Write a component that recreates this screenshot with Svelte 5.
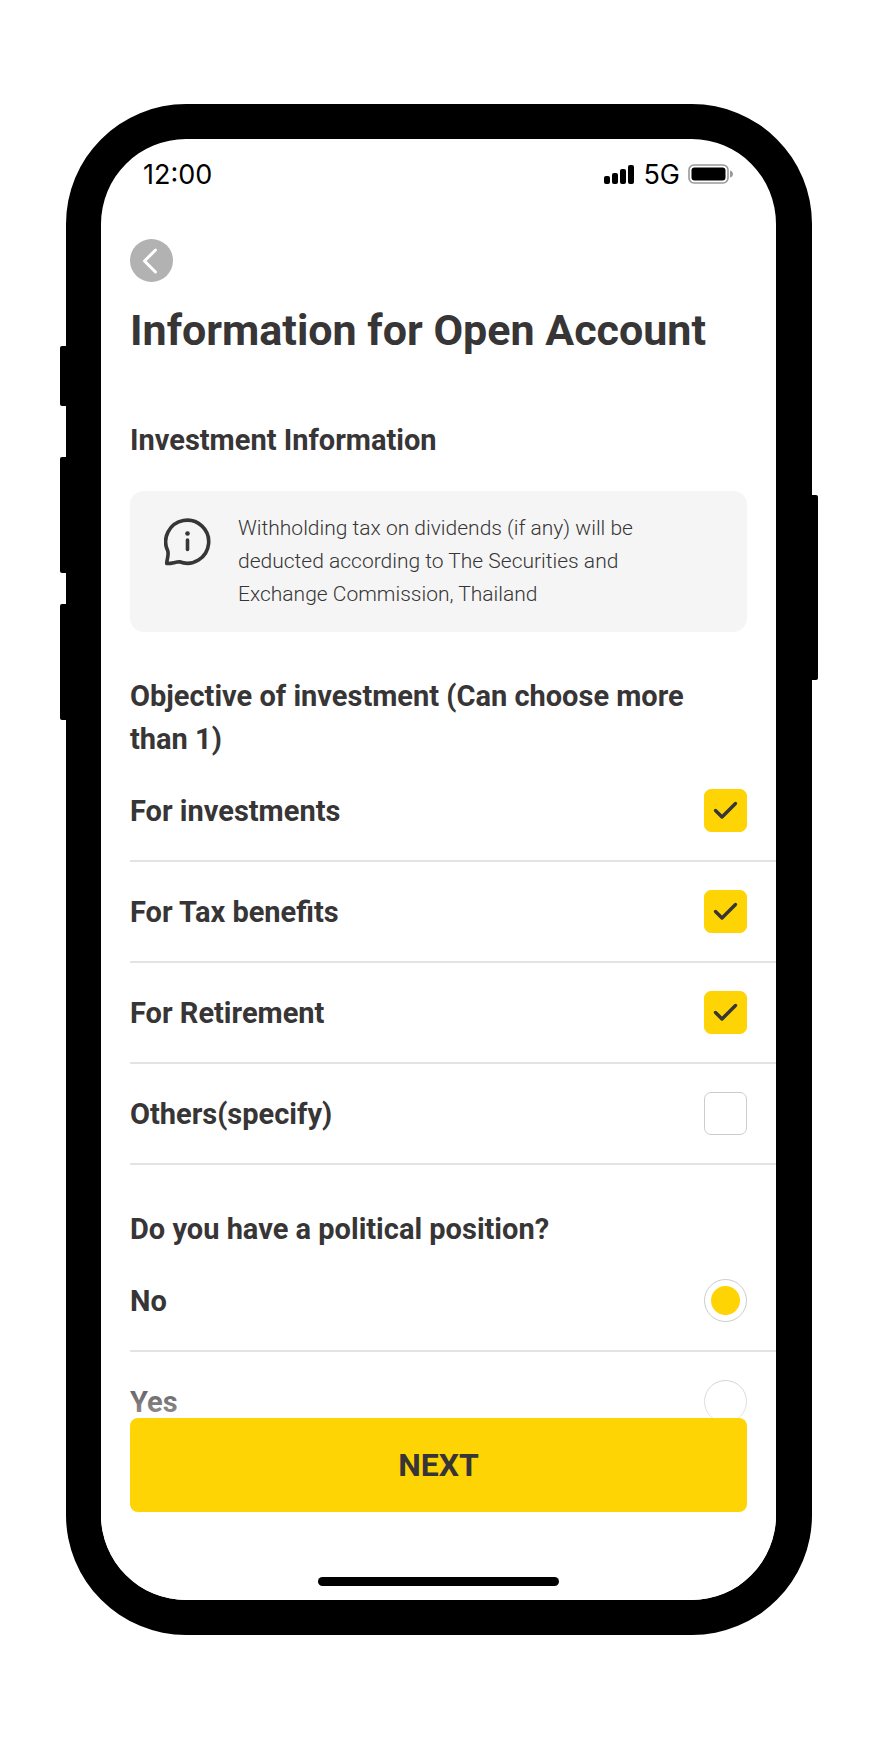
<div class="page">
	<div class="phone">
		<span class="key mute"></span>
		<span class="key up"></span>
		<span class="key down"></span>
		<span class="key power"></span>

		<div class="status">
			<span>12:00</span>
			<div class="signals">
				<svg width="31" height="19" viewBox="0 0 31 19">
					{#each bars as h, i}
						<rect x={i * 8} y={19 - h} width="6" height={h} rx="2" />
					{/each}
				</svg>
				<span>5G</span>
				<svg width="45" height="20" viewBox="0 0 45 20">
					<rect x="1" y="1" width="39" height="18" rx="5" fill="none" stroke="#999" stroke-width="1.6" />
					<rect x="3.500" y="3.500" width="34" height="13" rx="3" />
					<path d="M42 6.5c4 1 4 6 0 7z" fill="#999" />
				</svg>
			</div>
		</div>

		<main>
			<button class="back" aria-label="Back">
				<svg width="43" height="43" viewBox="0 0 43 43">
					<path d="M25.500 11L14.500 22l11 11" />
				</svg>
			</button>
			<h1>Information for Open Account</h1>
			<h2 class="section">Investment Information</h2>

			<div class="note">
				<svg width="48" height="48" viewBox="0 0 48 48">
					<path d="M2.800 45.500C2.500 42 5 38 3.800 33A21.500 21.500 0 1 1 15.500 43.800C11 44 7 46 2.800 45.500Z" />
					<path d="M23.500 22v9.500" />
					<circle cx="23.500" cy="15.500" r="2.300" />
				</svg>
				<p>Withholding tax on dividends (if any) will be deducted according to The Securities and Exchange Commission, Thailand</p>
			</div>

			<h2>Objective of investment (Can choose more than 1)</h2>
			{#each objectives as o}
				<label class="row">
					{o.label}
					<input type="checkbox" bind:checked={o.checked} />
				</label>
			{/each}

			<h2>Do you have a political position?</h2>
			{#each answers as a}
				<label class="row">
					{a}
					<input type="radio" name="position" value={a} bind:group={position} />
				</label>
			{/each}
		</main>

		<footer>
			<button class="next">NEXT</button>
			<div class="home"></div>
		</footer>
	</div>
</div>

<script>

const bars = [8, 11, 15, 19]
const answers = ['No', 'Yes']

let objectives = [
	{ label: 'For investments', checked: true },
	{ label: 'For Tax benefits', checked: true },
	{ label: 'For Retirement', checked: true },
	{ label: 'Others(specify)', checked: false },
]
let position = 'No'

</script>

<style>
:global(body) {
	margin: 0;
	background: #fff;
}
* {
	box-sizing: border-box;
}
.page {
	padding: 104px 68px 106px 66px;
}
.phone {
	position: relative;
	max-width: 746px;
	margin: 0 auto;
	border: 35px solid #000;
	border-right-width: 36px;
	border-radius: 120px;
	background: #fff;
	color: #373535;
	font-family: Roboto, sans-serif;
}

/* side keys sit over the edge of the body */
.key {
	position: absolute;
	left: -41px;
	width: 8px;
	height: 116px;
	border-radius: 2px;
	background: #000;
}
.mute {
	top: 207px;
	height: 60px;
}
.up {
	top: 318px;
}
.down {
	top: 465px;
}
.power {
	left: auto;
	right: -42px;
	top: 356px;
	height: 185px;
}

.status {
	display: flex;
	justify-content: space-between;
	align-items: center;
	height: 70px;
	padding: 0 43px 0 42px;
	color: #000;
	font-family: Inter, sans-serif;
	font-size: 27px;
	font-weight: 400;
}
.signals {
	display: flex;
	align-items: center;
	gap: 8px;
}

main {
	padding: 30px 0 0 29px;
}
button {
	border: 0;
	padding: 0;
	cursor: pointer;
}
.back {
	display: block;
	width: 43px;
	height: 43px;
	border-radius: 50%;
	background: #b2b2b2;
}
.back svg {
	display: block;
	fill: none;
	stroke: #fff;
	stroke-width: 3;
	stroke-linecap: round;
	stroke-linejoin: round;
}
h1 {
	margin: 24px 0 0;
	font-size: 43px;
	line-height: 48px;
}
h2 {
	margin: 43px 0 0;
	padding-right: 58px;
	font-size: 29px;
	line-height: 43px;
}
.section {
	margin: 65px 0 29px;
}
.note {
	display: flex;
	align-items: flex-start;
	gap: 26px;
	margin-right: 29px;
	padding: 21px 100px 21px 34px;
	border-radius: 14px;
	background: #f5f5f5;
}
.note svg {
	flex: none;
	margin-top: 6px;
	fill: none;
	stroke: #373535;
	stroke-width: 3.600;
	stroke-linecap: round;
	stroke-linejoin: round;
}
.note circle {
	fill: #373535;
	stroke: none;
}
.note p {
	margin: 0;
	font-size: 21px;
	font-weight: 300;
	line-height: 33px;
}

.row {
	display: flex;
	justify-content: space-between;
	align-items: center;
	height: 101px;
	padding-right: 29px;
	border-bottom: 2px solid #e3e3e3;
	font-size: 29px;
	font-weight: 700;
}
input {
	appearance: none;
	flex: none;
	width: 43px;
	height: 43px;
	margin: 0;
	border: 1px solid #ccc;
	border-radius: 7px;
	background: #fff;
}
input[type='checkbox']:checked {
	border-color: #ffd404;
	background: #ffd404 url("data:image/svg+xml,%3Csvg xmlns='http://www.w3.org/2000/svg' viewBox='0 0 43 43'%3E%3Cpath d='M11.500 21.500l6.500 6.500L31.500 14.500' fill='none' stroke='%23373535' stroke-width='3.400' stroke-linecap='round' stroke-linejoin='round'/%3E%3C/svg%3E") center / 43px no-repeat;
}
input[type='radio'] {
	border-radius: 50%;
}
input[type='radio']:checked {
	background: radial-gradient(circle, #ffd404 14px, #fff 15px);
}

footer {
	position: relative;
	margin-top: -93px;
	padding: 58px 29px 14px;
	border-radius: 0 0 85px 85px;
	background: linear-gradient(#fff0, #fff7 58px, #fff 59px);
}
.next {
	display: block;
	width: 100%;
	height: 94px;
	border-radius: 8px;
	background: #ffd404;
	color: #373535;
	font: 700 32px Roboto, sans-serif;
}
.home {
	width: 39%;
	height: 9px;
	margin: 65px auto 0;
	border-radius: 5px;
	background: #000;
}
</style>
